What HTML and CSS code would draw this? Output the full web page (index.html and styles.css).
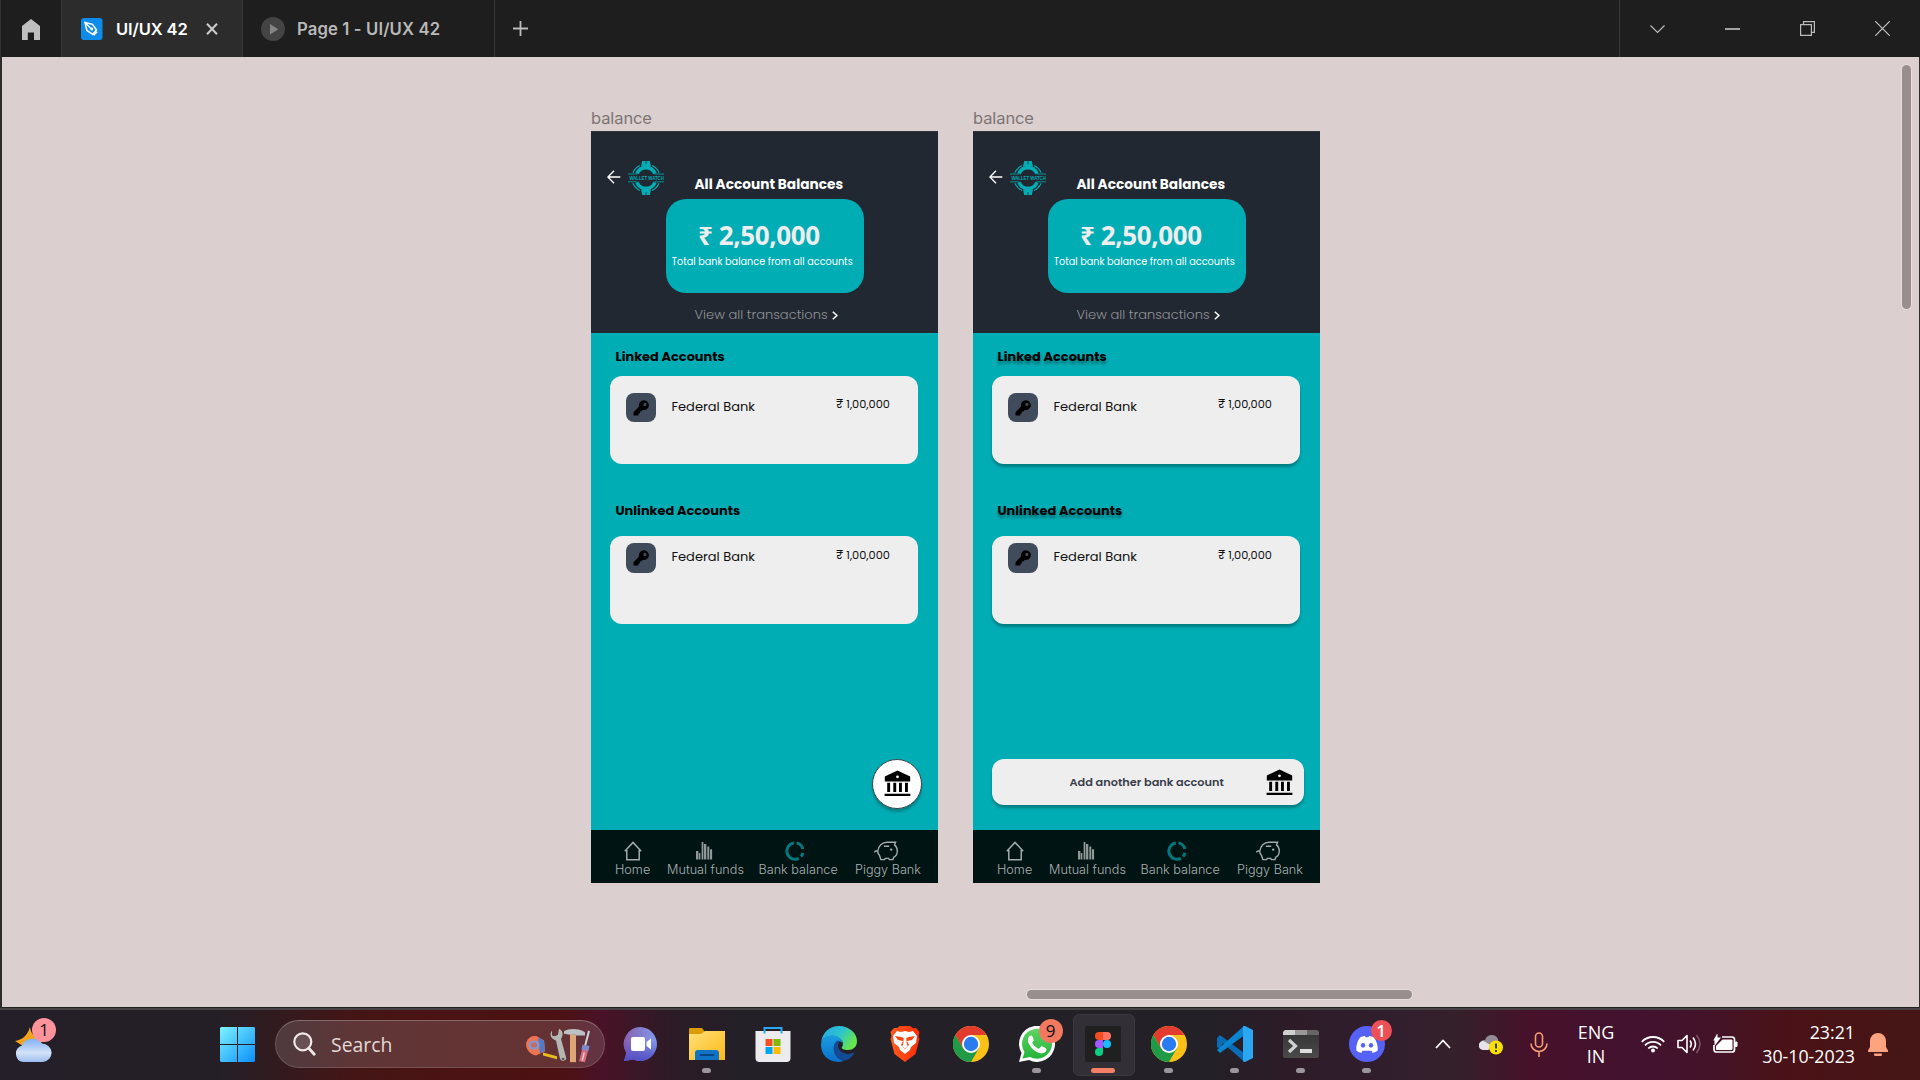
FILE: index.html
```html
<!DOCTYPE html>
<html lang="en">
<head>
<meta charset="utf-8">
<title>UI/UX 42</title>
<link rel="stylesheet" href="styles.css">
</head>
<body>
<svg class="defs" aria-hidden="true">
  <defs>
    <linearGradient id="g-win" x1="0" y1="0" x2="1" y2="1"><stop offset="0" stop-color="#7df3ff"/><stop offset="1" stop-color="#0a8ffb"/></linearGradient>
    <linearGradient id="g-cloud" x1="0" y1="0" x2="0" y2="1"><stop offset="0" stop-color="#7fb0f5"/><stop offset=".6" stop-color="#d3e2f7"/><stop offset="1" stop-color="#9dbdf0"/></linearGradient>
    <linearGradient id="g-chat" x1="0" y1="0" x2="1" y2="0"><stop offset="0" stop-color="#8b5fae"/><stop offset="1" stop-color="#7f9bee"/></linearGradient>
    <linearGradient id="g-chat2" x1="0" y1="0" x2="0" y2="1"><stop offset=".4" stop-color="#5050c8" stop-opacity="0"/><stop offset="1" stop-color="#5050c8"/></linearGradient>
    <linearGradient id="g-folder" x1="0" y1="0" x2="1" y2="1"><stop offset="0" stop-color="#ffe07a"/><stop offset="1" stop-color="#fbb917"/></linearGradient>
    <linearGradient id="g-edge1" x1="0" y1="0" x2="1" y2=".5"><stop offset="0" stop-color="#2aa5ea"/><stop offset=".55" stop-color="#2cc3cf"/><stop offset="1" stop-color="#66e64c"/></linearGradient>
    <linearGradient id="g-edge2" x1="0" y1="0" x2="0" y2="1"><stop offset="0" stop-color="#1b9de2"/><stop offset="1" stop-color="#0a6fc9"/></linearGradient>
    <linearGradient id="g-brave" x1="0" y1="0" x2="1" y2="0"><stop offset="0" stop-color="#ff5a1c"/><stop offset="1" stop-color="#fb2d08"/></linearGradient>
    <linearGradient id="g-wa" x1="0" y1="0" x2="0" y2="1"><stop offset="0" stop-color="#5fd564"/><stop offset="1" stop-color="#23b33a"/></linearGradient>
    <linearGradient id="g-term" x1="0" y1="0" x2="0" y2="1"><stop offset="0" stop-color="#333"/><stop offset="1" stop-color="#4a4a4a"/></linearGradient>
    <symbol id="arrow-left" viewBox="0 0 14 14"><path d="M13.3 7H1.2M7 .8.9 7 7 13.2" fill="none" stroke="#fff" stroke-width="1.4"/></symbol>
    <symbol id="logo" viewBox="0 0 36 34">
      <g fill="none" stroke="#00adb5">
        <path d="M4.9 11.8A14 14 0 0 1 12 4.6M24 4.6a14 14 0 0 1 7.1 7.2M4.9 22.3A14 14 0 0 0 12 29.5M24 29.5a14 14 0 0 0 7.1-7.2" stroke-width="1.1"/>
        <path d="M9 12.7a9.7 9.7 0 0 1 18 0M9 21.3a9.7 9.7 0 0 0 18 0" stroke-width="3.6"/>
        <path d="M0 13h9.3M26.7 13H36M0 20.8h9.5M26.5 20.8H36" stroke-width=".8"/>
      </g>
      <path d="M14.2 0h3.400v3h.8V0h3.400l1.200 5.500H13zM14.200 34h3.400v-3h.8v3h3.400l1.200-5.500H13z" fill="#00adb5"/>
      <text class="logo-text" x="1.4" y="19" textLength="34.4" lengthAdjust="spacingAndGlyphs">WALLET WATCH</text>
    </symbol>
    <symbol id="chevron-right" viewBox="0 0 6 9"><path d="M.8.7 4.9 4.5.8 8.3" fill="none" stroke="#fff" stroke-width="1.5"/></symbol>
    <symbol id="key" viewBox="0 0 16 16"><path d="M10.8.3a4.9 4.9 0 0 0-4.7 6.3L.5 12.2v3.2h4.9v-2h1.4v-1.900h1.600l1.200-1.600A4.900 4.900 0 1 0 10.800.3zm1.100 2.500a1.600 1.600 0 1 1 0 3.200 1.600 1.600 0 0 1 0-3.200z" fill="#000" fill-rule="evenodd"/></symbol>
    <symbol id="bank" viewBox="0 0 27 27"><path d="M13.500.4.8 6.400v5.200h25.400V6.400zM13.500 5.400a1.400 1.400 0 1 1 0 2.800 1.400 1.400 0 0 1 0-2.800zM3.200 12.700h2.900v9.200H3.200zM9.300 12.700h2.900v9.200H9.300zM15 12.700h2.900v9.200H15zM21 12.700h2.900v9.200H21zM.6 23.700h25.800v2.200H.6z" fill="#000" fill-rule="evenodd"/></symbol>
    <symbol id="nav-home" viewBox="0 0 18 20"><path d="M.8 10.200 9 1.400l8.200 8.800M2.800 9v9.700h12.400V9" fill="none" stroke="#a3aaaa" stroke-width="1.5"/></symbol>
    <symbol id="nav-funds" viewBox="0 0 17 18"><path d="M0 9h2.400v8.400H0zM2.900 11h1.500v6.400H2.900zM5.600 0h1.800v17.400H5.600zM8 2h2.300v15.400H8zM11.300 4.500h2v12.900h-2zM14 7.300h2.100v10.100H14z" fill="#8f9797"/></symbol>
    <symbol id="nav-ring" viewBox="0 0 20 20"><g fill="none" stroke="#04777e" stroke-width="3"><path d="M8.800 1.900a8.200 8.200 0 1 0 5 15.400M11.600 1.900a8.200 8.200 0 0 1 6.300 6.100M18 11.800a8.200 8.200 0 0 1-2 3.700"/></g></symbol>
    <symbol id="nav-pig" viewBox="0 0 24 20"><path d="M.6 11.500c.2-1.700 2.600-2 3.100-.9C4.100 4.700 8.300 1.200 13 1.200h8.600l-1.100 2.700c1.900 1.600 2.800 3.500 2.800 6 0 3.200-1.500 5.300-3.700 6.400l-.6 2.300h-3.600l-.7-1.200h-3.400l-.7 1.200H6.900l-1.500-4.400C4.100 12.900 3.800 12 3.700 10.600M9.900 5.200h5.300" fill="none" stroke="#a3aaaa" stroke-width="1.4"/><circle cx="17.200" cy="8.600" r="1.200" fill="#a3aaaa"/></symbol>
    <symbol id="chrome" viewBox="0 0 36 36">
      <circle cx="18" cy="18" r="18" fill="#fbc116"/>
      <path d="M2.400 9A18 18 0 0 1 33.600 9H18l-7.800 13.500z" fill="#e33b2e"/>
      <path d="M2.400 9A18 18 0 0 0 18 36l7.800-13.500H10.200z" fill="#219a47"/>
      <circle cx="18" cy="18" r="9" fill="#fff"/><circle cx="18" cy="18" r="7.200" fill="#2b7bf0"/>
    </symbol>
  </defs>
</svg>

<header class="titlebar">
  <div class="tab tab-home"><svg width="18" height="21" viewBox="0 0 18 21"><path d="M9 0 0 7v14h5.800v-7.500h6.200V21h6V7z" fill="#bfbfbf"/></svg></div>
  <div class="tab tab-active">
    <svg width="22" height="22" viewBox="0 0 22 22"><rect width="21.5" height="22" rx="3" fill="#0d8cec"/><path d="M4 4.500 11.500 6.300l4 5.700-3.800 4.300-5.800-3.800zM4 4.500l6.800 6.800M12.800 17.300l3.300-3.500" fill="none" stroke="#fff" stroke-width="1.5"/><circle cx="10.8" cy="11" r="1.5" fill="#fff"/></svg>
    <span class="tab-label label-file">UI/UX 42</span>
    <svg class="tab-close" width="12" height="12" viewBox="0 0 12 12"><path d="m1 .7 10 10.600M11 .7 1 11.300" stroke="#ccc" stroke-width="2"/></svg>
  </div>
  <div class="tab tab-page">
    <svg width="24" height="24" viewBox="0 0 24 24"><circle cx="12" cy="12" r="12" fill="#444"/><path d="M9 7v10.500l8.300-5.200z" fill="#858585"/></svg>
    <span class="tab-label label-page">Page 1 - UI/UX 42</span>
  </div>
  <svg class="plus" width="15" height="15" viewBox="0 0 15 15"><path d="M7.500 0v15M0 7.500h15" stroke="#bcbcbc" stroke-width="1.8"/></svg>
  <div class="window-controls">
    <svg width="15" height="15" viewBox="0 0 15 15"><path d="m.5 4.500 7 7 7-7" fill="none" stroke="#bbb" stroke-width="1.2"/></svg>
    <svg width="15" height="15" viewBox="0 0 15 15"><path d="M0 8h15" stroke="#c4c4c4" stroke-width="1.6"/></svg>
    <svg width="15" height="15" viewBox="0 0 15 15"><path d="M.6 3.600h10.800v10.800H.6zM3.500 3.500V.6h10.900v10.800h-3" fill="none" stroke="#bbb" stroke-width="1.2"/></svg>
    <svg width="15" height="15" viewBox="0 0 15 15"><path d="M.3.3l14.400 14.400M14.700.3.3 14.700" stroke="#c4c4c4" stroke-width="1.2"/></svg>
  </div>
</header>

<main class="canvas">
  <section class="frame frame-a">
    <div class="frame-name">balance</div>
    <div class="phone">
      <div class="summary">
        <div class="summary-top">
          <svg class="back" width="14" height="14"><use href="#arrow-left"/></svg>
          <svg class="logo" width="36" height="34"><use href="#logo"/></svg>
          <h1 class="title">All Account Balances</h1>
        </div>
        <div class="total"><div class="amount">₹ 2,50,000</div><div class="caption">Total bank balance from all accounts</div></div>
        <div class="view-all"><span>View all transactions</span><svg width="6" height="9"><use href="#chevron-right"/></svg></div>
      </div>
      <div class="accounts">
        <h2 class="heading linked">Linked Accounts</h2>
        <div class="card"><div class="badge"><svg width="16" height="16"><use href="#key"/></svg></div><span class="bank-name">Federal Bank</span><span class="sum">₹ 1,00,000</span></div>
        <h2 class="heading unlinked">Unlinked Accounts</h2>
        <div class="card card-tight"><div class="badge"><svg width="16" height="16"><use href="#key"/></svg></div><span class="bank-name">Federal Bank</span><span class="sum">₹ 1,00,000</span></div>
        <div class="fab"><svg width="27" height="27"><use href="#bank"/></svg></div>
      </div>
      <nav class="nav">
        <div class="nav-item nav-home"><svg width="18" height="20"><use href="#nav-home"/></svg><span>Home</span></div>
        <div class="nav-item nav-funds"><svg width="17" height="18"><use href="#nav-funds"/></svg><span>Mutual funds</span></div>
        <div class="nav-item nav-balance"><svg width="20" height="20"><use href="#nav-ring"/></svg><span>Bank balance</span></div>
        <div class="nav-item nav-piggy"><svg width="24" height="20"><use href="#nav-pig"/></svg><span>Piggy Bank</span></div>
      </nav>
    </div>
  </section>

  <section class="frame frame-b">
    <div class="frame-name">balance</div>
    <div class="phone">
      <div class="summary">
        <div class="summary-top">
          <svg class="back" width="14" height="14"><use href="#arrow-left"/></svg>
          <svg class="logo" width="36" height="34"><use href="#logo"/></svg>
          <h1 class="title">All Account Balances</h1>
        </div>
        <div class="total"><div class="amount">₹ 2,50,000</div><div class="caption">Total bank balance from all accounts</div></div>
        <div class="view-all"><span>View all transactions</span><svg width="6" height="9"><use href="#chevron-right"/></svg></div>
      </div>
      <div class="accounts raised">
        <h2 class="heading linked">Linked Accounts</h2>
        <div class="card"><div class="badge"><svg width="16" height="16"><use href="#key"/></svg></div><span class="bank-name">Federal Bank</span><span class="sum">₹ 1,00,000</span></div>
        <h2 class="heading unlinked">Unlinked Accounts</h2>
        <div class="card card-tight"><div class="badge"><svg width="16" height="16"><use href="#key"/></svg></div><span class="bank-name">Federal Bank</span><span class="sum">₹ 1,00,000</span></div>
        <div class="add"><span>Add another bank account</span><svg width="27" height="27"><use href="#bank"/></svg></div>
      </div>
      <nav class="nav">
        <div class="nav-item nav-home"><svg width="18" height="20"><use href="#nav-home"/></svg><span>Home</span></div>
        <div class="nav-item nav-funds"><svg width="17" height="18"><use href="#nav-funds"/></svg><span>Mutual funds</span></div>
        <div class="nav-item nav-balance"><svg width="20" height="20"><use href="#nav-ring"/></svg><span>Bank balance</span></div>
        <div class="nav-item nav-piggy"><svg width="24" height="20"><use href="#nav-pig"/></svg><span>Piggy Bank</span></div>
      </nav>
    </div>
  </section>
  <div class="scroll scroll-y"></div>
  <div class="scroll scroll-x"></div>
</main>

<footer class="taskbar">
  <div class="weather">
    <svg width="37" height="35" viewBox="0 0 37 35"><path d="M15 0c1 6 3 10 13 14L16 24 0 14c6-1 12-4 15-14z" fill="#f6a31c"/><path d="M8 35a8.500 8.500 0 0 1-1-16.500A11 9.500 0 0 1 27 16.500 10 9.300 0 0 1 28 35z" fill="url(#g-cloud)"/></svg>
    <span class="count count-weather">1</span>
  </div>
  <svg class="start" width="35" height="35" viewBox="0 0 35 35"><path d="M1 0h16v17H0V1zM18 0h16l1 1v16H18zM0 18h17v17H1l-1-1zM18 18h17v16l-1 1H18z" fill="url(#g-win)"/></svg>
  <div class="search">
    <svg width="23" height="24" viewBox="0 0 23 24"><circle cx="9.8" cy="9.8" r="8.5" fill="rgba(255,255,255,.12)" stroke="#f1e8e8" stroke-width="2.2"/><path d="m15.800 16.300 5.400 6" stroke="#f1e8e8" stroke-width="2.8" stroke-linecap="round"/></svg>
    <span>Search</span>
    <svg class="tools" width="66" height="35" viewBox="0 0 66 42" preserveAspectRatio="none">
      <path d="M17 29.500 31 34v3.500L17 33z" fill="#e8be20"/><path d="M0 19C1 12 6 8 11 10l7 5 1 13-9 5C4 32 0 26 0 19z" fill="#ee7350"/><path d="m12 11 6 4 1 12-5 4z" fill="#5379c5"/><circle cx="8" cy="20.5" r="5.6" fill="#8995c9"/><circle cx="8" cy="20.5" r="3" fill="#c46a64"/>
      <path d="M26 3v6l3 1 3-2 1-7c5 3 4 9 2 12l5 22a3 3 0 0 1-6 2l-4-22c-5-2-7-7-4-12z" fill="#b3b8b4"/><circle cx="37" cy="37" r="1.4" fill="#555"/>
      <path d="M44 8h6v33h-6z" fill="#dfa675"/><path d="M38 4c5-4 15-4 21 1v4H50V8h-6l-6-1z" fill="#bcc1c3"/>
      <path d="m62 3 2 1-4 18h-2z" fill="#d0d2da"/><path d="m57 22 6 1-4 18-6-1z" fill="#d66a7c"/><path d="m56.500 20 7 1.500-1 6-7-1.500z" fill="#7c8acb"/><path d="m57.500 29 1.500.3-2 10-1.500-.3z" fill="#f2c5ca"/>
    </svg>
  </div>
  <div class="apps">
    <div class="app"><svg width="36" height="36" viewBox="0 0 36 36"><path d="M18 1a17 17 0 1 1-8 32.500L1 35l2.300-8A17 17 0 0 1 18 1z" fill="url(#g-chat)"/><path d="M18 1a17 17 0 1 1-8 32.500L1 35l2.300-8A17 17 0 0 1 18 1z" fill="url(#g-chat2)"/><rect x="8" y="11" width="14" height="14" rx="2" fill="#fff"/><path d="m23.500 16 4.500-3.500v11L23.500 20z" fill="#fff"/></svg></div>
    <div class="app running"><svg width="36" height="36" viewBox="0 0 36 36"><path d="M0 3q0-1 1-1h12l3 4v6H0z" fill="#dd9b06"/><path d="M0 8h12l4-3h20v29H0z" fill="url(#g-folder)"/><path d="M6 34V27q0-3 3-3h18q3 0 3 3v7z" fill="#1073c4"/><path d="M11.500 29h13" stroke="#0a4686" stroke-width="1.8" stroke-linecap="round"/></svg></div>
    <div class="app"><svg width="36" height="36" viewBox="0 0 36 36"><path d="M9.500 8V2h17v6" fill="none" stroke="#2aa7ee" stroke-width="2"/><path d="M.5 5h35v27q0 4-4 4h-27q-4 0-4-4z" fill="#ececee"/><path d="M9.500 5v2.500M26.500 5v2.500" stroke="#2aa7ee" stroke-width="2"/><path d="M10.500 13h7v7h-7z" fill="#f25022"/><path d="M18.500 13h7v7h-7z" fill="#7fba00"/><path d="M10.500 21h7v7h-7z" fill="#00a4ef"/><path d="M18.500 21h7v7h-7z" fill="#ffb900"/></svg></div>
    <div class="app"><svg width="36" height="36" viewBox="0 0 36 36"><path d="M0 17C1 7 8 0 18 0s18 7 18 15c0 6-4 9-9 9-4 0-7-1-6-3 3-4-1-10-8-11C6 9 1 13 0 17z" fill="url(#g-edge1)"/><path d="M0 19C0 13 5 9 12 9.500c6 .5 9 4 9 7-4-3-8 0-8 6 0 7 5 11 10 12.500C10 39 0 30 0 19z" fill="url(#g-edge2)"/><path d="M17 14.500c-5 2-6 10-2 15.500 3 4 8 5.500 11 4 3-1.500 6-4.500 7-6.500.5-1-.5-1-1-.7-5 2.500-11 .7-13.500-3-2-3-1.500-6.500 0-8.300z" fill="#134a94"/></svg></div>
    <div class="app"><svg width="30" height="36" viewBox="0 0 30 36"><path d="m7 2 3-2h10l3 2 3 0 3.500 4-1 4 1 3-4 15L15 36 4.500 28 .5 13l1-3-1-4L4 2z" fill="url(#g-brave)"/><path d="m7 5 4 1 4-1 4 1 4-1 4 5-1 7-5 4-1 3-5 4-5-4-1-3-5-4-1-7z" fill="#fff"/><path d="m5 10 6 1 3 1-1 7 2 3 2-3-1-7 3-1 6-1-3 4-5 1 2 4-4 4-4-4 2-4-5-1z" fill="#fb4410"/><path d="m13.500 9h3l-.5 9 2 2-3 2.500-3-2.500 2-2z" fill="#fff"/></svg></div>
    <div class="app"><svg width="36" height="36"><use href="#chrome"/></svg></div>
    <div class="app running"><svg width="36" height="36" viewBox="0 0 36 36"><path d="M0 36 2.500 27A18 18 0 1 1 10 34z" fill="#fff"/><path d="m3.500 32.500 2-6.500A15 15 0 1 1 11 31z" fill="url(#g-wa)"/><path d="M12.500 9.500c1 0 2.500 4.500 2.200 5-.2.8-1.700 1.600-1.500 2.300 1.500 3 4 5 6.500 6 1 0 2-2.500 2.800-2.500.8 0 4.800 2 5 2.700 0 4-4 5-7 4C15 25.500 10.500 20 9 15.500 8.500 11.500 10.500 9.500 12.500 9.500z" fill="#fff"/></svg><span class="count count-whatsapp">9</span></div>
    <div class="app running active"><svg width="36" height="36" viewBox="0 0 36 36"><rect width="36" height="36" rx="2.5" fill="#202020"/><path d="M14 6h4v8h-4a4 4 0 0 1 0-8z" fill="#f24e1e"/><path d="M18 6h4a4 4 0 0 1 0 8h-4z" fill="#ff7262"/><path d="M14 14h4v8h-4a4 4 0 0 1 0-8z" fill="#a259ff"/><circle cx="22" cy="18" r="4" fill="#1abcfe"/><path d="M14 22h4v4a4 4 0 1 1-4-4z" fill="#0acf83"/></svg></div>
    <div class="app running"><svg width="36" height="36"><use href="#chrome"/></svg></div>
    <div class="app running"><svg width="36" height="36" viewBox="0 0 36 36"><path d="m0 12 3-3 24 18v8.500zM0 12l3-3 5 4-5 10-3-2z" fill="#0a6cb4"/><path d="m0 24 3 3L27 9.500V0z" fill="#0c85d0"/><path d="m26 0 2 0 8 4v28l-8 4-2-.5z" fill="#2aa6f2"/></svg></div>
    <div class="app running"><svg width="36" height="28" viewBox="0 0 36 28"><rect width="36" height="28" rx="2" fill="url(#g-term)"/><path d="M2 0h10v5H0V2z" fill="#cfcfcf"/><path d="M12 0h12v5H12z" fill="#999"/><path d="M24 0h10l2 2v3H24z" fill="#666"/><path d="m6 10 6.500 6L6 22" fill="none" stroke="#d0d0d0" stroke-width="3.2"/><path d="M17 19h12v4H17z" fill="#ddd"/></svg></div>
    <div class="app running"><svg width="36" height="36" viewBox="0 0 36 36"><circle cx="18" cy="18" r="18" fill="#5662f5"/><path d="M11 11.500c2-1 4-1.500 5-1.500l.5 1.200h3L20 10c1.500 0 3 .5 5 1.500 3 4 4 9 3.700 13-2 1.500-3.700 2-5 2.500l-1.200-2.200h-9L12.300 27c-1.500-.5-3-1-5-2.500-.3-5 1-9.500 3.700-13z" fill="#fff"/><ellipse cx="14" cy="19.3" rx="2.2" ry="2.4" fill="#5662f5"/><ellipse cx="22" cy="19.3" rx="2.2" ry="2.4" fill="#5662f5"/></svg><span class="count count-discord">1</span></div>
  </div>
  <div class="tray">
    <svg class="tray-chevron" width="16" height="10" viewBox="0 0 16 10"><path d="m1 9 7-7.500L15 9" fill="none" stroke="#fff" stroke-width="1.8"/></svg>
    <svg class="tray-cloud" width="24" height="21" viewBox="0 0 24 21"><path d="M5 16a5 5 0 0 1 1-10 7 7 0 0 1 13-1l1 8z" fill="#948b97"/><path d="M4 16a4.500 4.500 0 0 1 .5-9l7 4-2 5z" fill="#e8e3e8"/><circle cx="17" cy="13.5" r="7" fill="#fae100"/><path d="M17 9.500v5M17 16v2" stroke="#222" stroke-width="1.7"/></svg>
    <svg class="tray-mic" width="18" height="25" viewBox="0 0 18 25"><rect x="5.5" y="1" width="7" height="14" rx="3.5" fill="none" stroke="#f79c72" stroke-width="1.6"/><path d="M1 11.500a8 8 0 0 0 16 0M9 19.500V25" fill="none" stroke="#f79c72" stroke-width="1.6"/></svg>
    <div class="lang"><span>ENG</span><span>IN</span></div>
    <svg class="tray-wifi" width="24" height="18" viewBox="0 0 24 18"><g fill="none" stroke="#fff" stroke-width="1.8"><path d="M.8 6.800a15.500 15.500 0 0 1 22.400 0M4 10.300a11 11 0 0 1 16 0M7.300 13.500a6.500 6.500 0 0 1 9.400 0"/></g><circle cx="12" cy="15.500" r="2" fill="#fff"/></svg>
    <svg class="tray-sound" width="24" height="20" viewBox="0 0 24 20"><path d="M1 6.500h4l5-5v17l-5-5H1z" fill="none" stroke="#fff" stroke-width="1.6" stroke-linejoin="round"/><path d="M13 6.500q2.500 3.500 0 7M16 3.500q5 6.500 0 13" fill="none" stroke="#fff" stroke-width="1.6"/><path d="M19.500 1q7 9 0 18" fill="none" stroke="#795563" stroke-width="1.6"/></svg>
    <svg class="tray-battery" width="25" height="20" viewBox="0 0 25 20"><path d="M9 3h10q2.500 0 2.500 2.500v10q0 2.500-2.500 2.500H3.500Q1 18 1 15.500V11" fill="none" stroke="#fff" stroke-width="1.7"/><path d="M9.500 6H19v9.500H3.500V12zM22.500 8H24v4.500h-1.500z" fill="#fff" stroke="#fff"/><path d="M4.500-1v4.500H8L1.500 12V6.500H.3z" fill="#fff"/></svg>
    <div class="clock"><span class="time">23:21</span><span class="date">30-10-2023</span></div>
    <svg class="tray-bell" width="20" height="23" viewBox="0 0 20 23"><path d="M10 0a8 8 0 0 0-8 8v6l-2 3.500V19h20v-1.500L18 14V8a8 8 0 0 0-8-8zM6 20.500h8a4 4 0 0 1-8 0z" fill="#fca47f"/></svg>
  </div>
</footer>
</body>
</html>
```
FILE: styles.css
```css
* { box-sizing: border-box; }
body {
  margin: 0;
  width: 1920px;
  height: 1080px;
  overflow: hidden;
  display: flex;
  flex-direction: column;
  background: #2c2c2c;
  font-family: Poppins, Inter, sans-serif;
}
svg { display: block; flex: none; }
span, h1, h2 { white-space: nowrap; }
h1, h2 { margin: 0; }
.defs { position: absolute; width: 0; height: 0; }

/* Title bar */
.titlebar { display: flex; align-items: center; height: 57px; background: #1e1e1e; font-family: Inter, sans-serif; }
.tab { display: flex; align-items: center; height: 57px; border-right: 1px solid #383838; }
.tab-home { width: 62px; padding-left: 21px; padding-top: 2px; border-left: 1px solid #333; }
.tab-active { width: 181px; padding-left: 19px; background: #2c2c2c; }
.tab-page { width: 252px; padding-left: 18px; }
.tab-label { font-size: 16.5px; font-weight: 600; line-height: 22px; }
.label-file { margin-left: 13px; width: 72px; color: #fff; letter-spacing: -.1px; }
.tab-close { margin-left: 18px; }
.label-page { margin-left: 12px; color: #b9b9b9; font-size: 16.7px; letter-spacing: .12px; }
.plus { margin-left: 18px; }
.window-controls { display: flex; align-items: center; gap: 60px; margin-left: auto; height: 57px; padding: 0 30px; border-left: 1px solid #3a3a3a; }

/* Canvas */
.canvas { position: relative; height: 951px; margin: 0 1px 0 2px; background: #dbcfcf; border-bottom: 1px solid #222; }
.frame { position: absolute; top: 50px; width: 347px; }
.frame-a { left: 589px; }
.frame-b { left: 971px; }
.frame-name { height: 24px; font: 400 16.5px/22px Inter, sans-serif; letter-spacing: -.1px; color: #7d7575; }
.phone { width: 347px; height: 752px; background: #00adb5; }
.scroll { position: absolute; background: #978e8d; border-radius: 6px; box-shadow: 0 0 0 1px #e6dddd; }
.scroll-y { right: 8px; top: 8px; width: 9px; height: 244px; }
.scroll-x { left: 1025px; top: 933px; width: 385px; height: 9px; }

.summary { height: 201.5px; padding-top: 29px; background: #222831; border-top: 1px solid #32363c; color: #fff; }
.summary-top { display: flex; height: 34px; padding-left: 16px; }
.back { margin-top: 9px; }
.logo { margin-left: 6.5px; }
.logo-text { font: 700 6px "Liberation Sans", sans-serif; fill: #00adb5; }
.title { margin: 14px 0 0 31px; font-size: 13.7px; font-weight: 700; line-height: 20px; }
.total { width: 198px; height: 94px; margin: 4px 0 0 75px; padding-top: 21px; border-radius: 20px; background: #00adb5; }
.amount { padding-left: 32px; font: 700 26px/30px "Noto Sans", sans-serif; letter-spacing: -.4px; color: #eee; white-space: nowrap; }
.caption { margin-top: 5px; padding-left: 5.7px; font-size: 9.7px; line-height: 14px; white-space: nowrap; }
.view-all { display: flex; align-items: center; gap: 4px; margin: 12px 0 0 103.5px; font-size: 13.05px; font-weight: 300; line-height: 20px; color: #8f9297; }
.view-all span { width: 133px; }

.accounts { display: flex; flex-direction: column; height: 497px; padding-top: 14.8px; }
.heading { margin-left: 24.5px; font-size: 12.9px; font-weight: 700; line-height: 20px; color: #000; }
.unlinked { margin-top: 37.5px; }
.card { display: flex; width: 308px; height: 88px; margin: 8.7px 0 0 18.5px; padding: 17px 27.5px 0 16.5px; border-radius: 12px; background: #eee; color: #111; }
.card-tight { margin-top: 14.5px; padding-top: 7.5px; }
.badge { display: grid; place-items: center; width: 29.5px; height: 29.5px; border-radius: 8px; background: #404b5c; }
.bank-name { margin: 3.8px 0 0 16px; font-size: 13px; line-height: 20px; }
.sum { margin: 1.5px 0 0 auto; font-size: 11.35px; line-height: 20px; }
.fab { display: grid; place-items: center; width: 50px; height: 50px; margin: auto 16px 21px auto; border: 1px solid #3a4450; border-radius: 50%; background: #fff; box-shadow: 0 3px 3px rgba(0,0,0,.25); }
.add { display: flex; align-items: center; width: 312px; height: 46px; margin: auto 0 24.5px 18.5px; padding: 0 11px 0 78px; border-radius: 12px; background: #eee; color: #393e4a; font-size: 11.3px; font-weight: 600; }
.add svg { margin: 1px 0 0 auto; }
.raised .card, .raised .add { box-shadow: 0 3px 3px rgba(0,0,0,.28); }
.raised .heading { text-shadow: 0 3px 3px rgba(0,0,0,.35); }

.nav { display: flex; height: 53.5px; padding: 11px 0 0 24px; background: #001414; color: #a9afaf; font: 300 12.65px/20px Inter, sans-serif; }
.nav-item { display: grid; grid-template-rows: 19px 20px; justify-items: center; }
.nav-home { width: 34px; }
.nav-funds { width: 77px; margin-left: 18px; }
.nav-balance { width: 79px; margin-left: 14.5px; }
.nav-piggy { width: 66px; margin-left: 17.5px; }
.nav-funds svg { margin: 1px 3px 0 0; }
.nav-balance svg { margin-right: 6px; }
.nav-piggy svg { margin-right: 5px; }

/* Taskbar */
.taskbar {
  display: flex;
  align-items: center;
  height: 72px;
  padding-bottom: 2px;
  border-top: 2px solid #464246;
  font-family: "Open Sans", sans-serif;
  color: #fff;
  background: linear-gradient(90deg, #241f28 0, #241f26 220px, #441516 350px, #4a1313 430px, #4c1112 560px, #4a1226 600px, #2c1b27 670px, #232028 740px, #232028 1210px, #2d1b28 1290px, #321f2e 1400px, #35202a 1460px, #47112a 1530px, #42122f 1640px, #441329 1710px, #4a1216 1790px, #461616 1920px);
}
.weather { position: relative; width: 37px; height: 35px; margin-left: 15px; }
.count { position: absolute; border-radius: 50%; text-align: center; font-size: 17px; }
.count-weather { left: 17px; top: -8.5px; width: 24px; height: 24px; line-height: 23px; background: #ff939c; color: #111; }
.start { margin-left: 168px; }
.search { display: flex; align-items: center; width: 330px; height: 48px; margin-left: 20px; padding-left: 17px; border-radius: 24px; border: 1px solid rgba(255,255,255,.14); border-top-color: rgba(255,255,255,.25); background: rgba(255,255,255,.14); }
.search span { margin-left: 15px; font-size: 19.4px; color: #e3d8d8; }
.tools { margin: 2px 12px 0 auto; }
.apps { display: flex; margin-left: 2.5px; }
.app { position: relative; display: grid; place-items: center; width: 66px; height: 70px; padding-bottom: 2px; }
.running::after { content: ""; position: absolute; left: 28px; top: 59px; width: 9px; height: 5px; border-radius: 3px; background: #9c959c; }
.active::before { content: ""; position: absolute; left: 3px; top: 5px; width: 60px; height: 60px; border-radius: 6px; background: #322f37; border: 1px solid #3c3941; }
.active svg { position: relative; }
.active::after { left: 21px; width: 24px; background: #f47f64; }
.app svg { margin-top: 2px; }
.count-whatsapp { left: 35px; top: 10px; width: 24px; height: 24px; line-height: 23px; background: #f2795f; color: #111; }
.count-discord { left: 37px; top: 11px; width: 21px; height: 21px; line-height: 21px; font-weight: 600; background: #ee5058; }
.tray { display: flex; align-items: center; font-size: 18px; line-height: 24px; }
.tray-chevron { margin-left: 35.5px; }
.tray-cloud { margin-left: 28px; }
.tray-mic { margin-left: 27px; }
.lang { display: flex; flex-direction: column; align-items: center; width: 40px; margin-left: 28px; }
.tray-wifi { margin-left: 25px; }
.tray-sound { margin-left: 12px; }
.tray-battery { margin-left: 12px; }
.clock { display: flex; flex-direction: column; align-items: flex-end; width: 94px; margin-left: 23px; font-size: 17.8px; }
.tray-bell { margin-left: 13px; }
```
